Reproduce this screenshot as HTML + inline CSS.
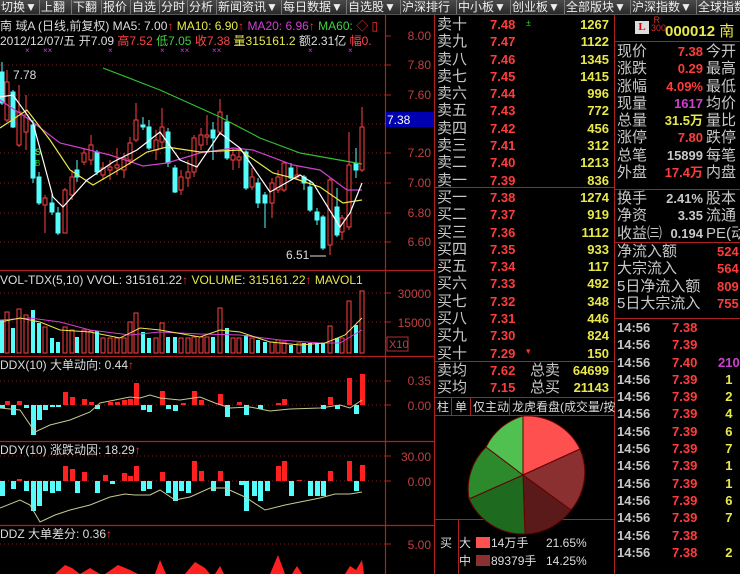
<!DOCTYPE html><html><head><meta charset="utf-8"><style>
*{margin:0;padding:0;box-sizing:border-box}
body{width:740px;height:574px;background:#000;overflow:hidden;position:relative;font-family:"Liberation Sans","Noto Sans CJK SC",sans-serif;}
.a{position:absolute;white-space:nowrap}
#tb{position:absolute;left:0;top:0;width:740px;height:15px;background:linear-gradient(#4a4a4a,#2a2a2a);border-bottom:1px solid #555;overflow:hidden}
#tb span{position:absolute;top:0;height:15px;line-height:15px;font-size:12px;color:#eee;border-right:1px solid #777;padding:0 1px;white-space:nowrap;overflow:hidden}
.ob{font-size:15px;color:#c8c8c8;line-height:17.3px}
.r{color:#ff3c3c;font-weight:bold}
.y{color:#e8e84a;font-weight:bold}
.g{color:#c8c8c8}
</style></head><body>
<div id="tb">
<span style="left:0;width:40px">切换▼</span><span style="left:40px;width:32px">上翻</span><span style="left:72px;width:30px">下翻</span><span style="left:102px;width:29px">报价</span><span style="left:131px;width:29px">自选</span><span style="left:160px;width:28px">分时</span><span style="left:188px;width:29px">分析</span><span style="left:217px;width:65px">新闻资讯▼</span><span style="left:282px;width:65px">每日数据▼</span><span style="left:347px;width:54px">自选股▼</span><span style="left:401px;width:56px">沪深排行</span><span style="left:457px;width:54px">中小板▼</span><span style="left:511px;width:54px">创业板▼</span><span style="left:565px;width:66px">全部版块▼</span><span style="left:631px;width:66px">沪深指数▼</span><span style="left:697px;width:60px">全球指数</span>
</div>
<div class="a" style="left:0;top:17px;font-size:12px;color:#ddd">南 琙A (日线,前复权) MA5: 7.00<span style="color:#f33">↑</span> <span style="color:#e8e84a">MA10: 6.90</span><span style="color:#f33">↑</span> <span style="color:#d040d0">MA20: 6.96</span><span style="color:#f33">↑</span> <span style="color:#40d040">MA60:</span> <span style="color:#f33">◇ ▯</span></div>
<div class="a" style="left:0;top:32px;font-size:12px;color:#ddd">2012/12/07/五 开7.09 <span style="color:#f44">高7.52</span> <span style="color:#4c4">低7.05</span> <span style="color:#f44">收7.38</span> <span style="color:#e8e84a">量315161.2</span> 额2.31亿 <span style="color:#f44">幅0.</span></div>
<svg class="a" style="left:0;top:0" width="440" height="574">
<g fill="#d040d0" font-size="8" font-family="Liberation Sans"><text x="25" y="53">×</text><text x="43" y="53">××</text><text x="108" y="53">×</text><text x="160" y="53">×</text><text x="180" y="53">××</text><text x="212" y="53">××</text><text x="308" y="53">×</text><text x="348" y="53">×</text></g>
<g stroke="#802020" stroke-dasharray="1,3"><line x1="0" x2="385" y1="65" y2="65"/><line x1="0" x2="385" y1="95" y2="95"/><line x1="0" x2="385" y1="124" y2="124"/><line x1="0" x2="385" y1="153" y2="153"/><line x1="0" x2="385" y1="183" y2="183"/><line x1="0" x2="385" y1="213" y2="213"/><line x1="0" x2="385" y1="242" y2="242"/><line x1="0" x2="385" y1="293" y2="293"/><line x1="0" x2="385" y1="322" y2="322"/><line x1="0" x2="385" y1="381" y2="381"/><line x1="0" x2="385" y1="405" y2="405"/><line x1="0" x2="385" y1="456" y2="456"/><line x1="0" x2="385" y1="481" y2="481"/><line x1="0" x2="385" y1="544" y2="544"/></g>
<g stroke="#b02020" stroke-width="1.2"><line x1="0" x2="434" y1="270.5" y2="270.5"/><line x1="0" x2="434" y1="356.5" y2="356.5"/><line x1="0" x2="434" y1="441.5" y2="441.5"/><line x1="0" x2="434" y1="525.5" y2="525.5"/><line x1="385.5" x2="385.5" y1="15" y2="574"/><line x1="434.5" x2="434.5" y1="15" y2="574"/></g>
<g id="candles" stroke-width="1">
<g stroke="#54fcfc" fill="#54fcfc">
<line x1="2" x2="2" y1="62" y2="105"/><rect x="0" y="72" width="4" height="31"/>
<line x1="13" x2="13" y1="90" y2="128"/><rect x="11" y="92" width="4" height="35"/>
<line x1="33" x2="33" y1="120" y2="183"/><rect x="31" y="125" width="4" height="53"/>
<line x1="39" x2="39" y1="172" y2="205"/><rect x="37" y="177" width="4" height="26"/>
<line x1="52" x2="52" y1="193" y2="215"/><rect x="50" y="203" width="4" height="9"/>
<line x1="58" x2="58" y1="207" y2="235"/><rect x="56" y="213" width="4" height="20"/>
<line x1="77" x2="77" y1="160" y2="182"/><rect x="75" y="170" width="4" height="7"/>
<line x1="97" x2="97" y1="150" y2="175"/><rect x="95" y="152" width="4" height="20"/>
<line x1="143" x2="143" y1="117" y2="130"/><rect x="141" y="125" width="4" height="2"/>
<line x1="149" x2="149" y1="120" y2="150"/><rect x="147" y="127" width="4" height="21"/>
<line x1="168" x2="168" y1="128" y2="167"/><rect x="166" y="132" width="4" height="31"/>
<line x1="175" x2="175" y1="165" y2="193"/><rect x="173" y="168" width="4" height="24"/>
<line x1="213" x2="213" y1="122" y2="160"/><rect x="211" y="130" width="4" height="8"/>
<line x1="227" x2="227" y1="115" y2="160"/><rect x="225" y="122" width="4" height="36"/>
<line x1="246" x2="246" y1="150" y2="190"/><rect x="244" y="152" width="4" height="36"/>
<line x1="258" x2="258" y1="178" y2="208"/><rect x="256" y="183" width="4" height="20"/>
<line x1="265" x2="265" y1="192" y2="228"/><rect x="263" y="195" width="4" height="8"/>
<line x1="291" x2="291" y1="163" y2="180"/><rect x="289" y="168" width="4" height="10"/>
<line x1="304" x2="304" y1="175" y2="190"/><rect x="302" y="177" width="4" height="6"/>
<line x1="310" x2="310" y1="180" y2="212"/><rect x="308" y="187" width="4" height="23"/>
<line x1="317" x2="317" y1="208" y2="225"/><rect x="315" y="212" width="4" height="8"/>
<line x1="323" x2="323" y1="215" y2="250"/><rect x="321" y="217" width="4" height="31"/>
<line x1="337" x2="337" y1="188" y2="237"/><rect x="335" y="207" width="4" height="28"/>
<line x1="356" x2="356" y1="148" y2="178"/><rect x="354" y="163" width="4" height="7"/>
</g>
<g stroke="#ff4040" fill="#000">
<line x1="7" x2="7" y1="70" y2="122"/><rect x="5" y="82" width="4" height="38"/>
<line x1="19" x2="19" y1="85" y2="147"/><rect x="17" y="112" width="4" height="33"/>
<line x1="26" x2="26" y1="95" y2="150"/><rect x="24" y="115" width="4" height="17"/>
<line x1="45" x2="45" y1="195" y2="233"/><rect x="43" y="198" width="4" height="7"/>
<line x1="65" x2="65" y1="188" y2="233"/><rect x="63" y="190" width="4" height="43"/>
<line x1="72" x2="72" y1="170" y2="200"/><rect x="70" y="177" width="4" height="18"/>
<line x1="84" x2="84" y1="148" y2="165"/><rect x="82" y="153" width="4" height="9"/>
<line x1="91" x2="91" y1="135" y2="165"/><rect x="89" y="145" width="4" height="15"/>
<line x1="103" x2="103" y1="162" y2="180"/><rect x="101" y="168" width="4" height="7"/>
<line x1="110" x2="110" y1="160" y2="180"/><rect x="108" y="167" width="4" height="3"/>
<line x1="117" x2="117" y1="148" y2="175"/><rect x="115" y="165" width="4" height="3"/>
<line x1="124" x2="124" y1="153" y2="178"/><rect x="122" y="158" width="4" height="12"/>
<line x1="130" x2="130" y1="137" y2="165"/><rect x="128" y="143" width="4" height="17"/>
<line x1="136" x2="136" y1="103" y2="142"/><rect x="134" y="120" width="4" height="20"/>
<line x1="156" x2="156" y1="130" y2="160"/><rect x="154" y="140" width="4" height="10"/>
<line x1="162" x2="162" y1="108" y2="148"/><rect x="160" y="127" width="4" height="15"/>
<line x1="181" x2="181" y1="170" y2="195"/><rect x="179" y="177" width="4" height="13"/>
<line x1="188" x2="188" y1="160" y2="187"/><rect x="186" y="172" width="4" height="6"/>
<line x1="194" x2="194" y1="135" y2="177"/><rect x="192" y="138" width="4" height="34"/>
<line x1="201" x2="201" y1="128" y2="150"/><rect x="199" y="135" width="4" height="10"/>
<line x1="207" x2="207" y1="115" y2="145"/><rect x="205" y="135" width="4" height="2"/>
<line x1="220" x2="220" y1="99" y2="135"/><rect x="218" y="112" width="4" height="20"/>
<line x1="233" x2="233" y1="148" y2="170"/><rect x="231" y="155" width="4" height="5"/>
<line x1="239" x2="239" y1="150" y2="168"/><rect x="237" y="157" width="4" height="3"/>
<line x1="252" x2="252" y1="168" y2="190"/><rect x="250" y="177" width="4" height="10"/>
<line x1="272" x2="272" y1="178" y2="218"/><rect x="270" y="183" width="4" height="20"/>
<line x1="278" x2="278" y1="170" y2="193"/><rect x="276" y="177" width="4" height="13"/>
<line x1="284" x2="284" y1="162" y2="192"/><rect x="282" y="163" width="4" height="27"/>
<line x1="297" x2="297" y1="165" y2="180"/><rect x="295" y="175" width="4" height="2"/>
<line x1="330" x2="330" y1="178" y2="255"/><rect x="328" y="180" width="4" height="65"/>
<line x1="342" x2="342" y1="215" y2="240"/><rect x="340" y="218" width="4" height="14"/>
<line x1="349" x2="349" y1="132" y2="230"/><rect x="347" y="165" width="4" height="62"/>
<line x1="362" x2="362" y1="107" y2="172"/><rect x="360" y="127" width="4" height="43"/>
</g></g>
<g fill="none" stroke-width="1.2">
<polyline stroke="#30c030" points="103,68 160,90 220,117 260,138 300,153 362,164"/>
<polyline stroke="#d040d0" points="0,100 30,120 60,143 110,155 143,166 167,163 200,153 233,148 253,150 293,165 320,170 347,190 362,190"/>
<polyline stroke="#e8e84a" points="0,128 27,110 50,140 70,170 93,185 127,165 147,152 167,147 200,152 240,150 273,173 293,178 320,187 343,203 362,200"/>
<polyline stroke="#ffffff" points="0,97 13,95 33,123 53,197 63,207 87,180 113,162 137,150 160,132 180,160 197,167 220,133 240,148 270,192 300,175 313,183 340,227 350,213 362,183"/>
</g>
<text x="13" y="79" fill="#ddd" font-size="12" font-family="Liberation Sans">7.78</text>
<text x="286" y="259" fill="#ddd" font-size="12" font-family="Liberation Sans">6.51</text>
<line x1="310" y1="256" x2="326" y2="256" stroke="#ddd"/>
<text x="35" y="155" fill="#30d030" font-size="9" font-weight="bold">S</text><text x="35" y="166" fill="#30d030" font-size="8">B</text>
<g font-family="Liberation Sans" font-size="12" fill="#c04040" text-anchor="end"><text x="431" y="40">8.00</text><text x="431" y="69">7.80</text><text x="431" y="99">7.60</text><text x="431" y="157">7.20</text><text x="431" y="187">7.00</text><text x="431" y="217">6.80</text><text x="431" y="246">6.60</text><text x="431" y="298">30000</text><text x="431" y="327">15000</text><text x="431" y="385">0.35</text><text x="431" y="410">0.00</text><text x="431" y="461">30.00</text><text x="431" y="486">0.00</text><text x="431" y="549">5.00</text></g>
<rect x="387" y="337" width="21" height="14" fill="none" stroke="#b03030"/><text x="389" y="348" fill="#c04040" font-size="11" font-family="Liberation Sans">X10</text>
<rect x="386" y="112" width="48" height="15" fill="#0000b0"/><text x="387" y="124" fill="#fff" font-size="12" font-family="Liberation Sans">7.38</text>
<g stroke="#b02020"><line x1="386" x2="391" y1="36" y2="36"/><line x1="386" x2="391" y1="65" y2="65"/><line x1="386" x2="391" y1="95" y2="95"/><line x1="386" x2="391" y1="153" y2="153"/><line x1="386" x2="391" y1="183" y2="183"/><line x1="386" x2="391" y1="213" y2="213"/><line x1="386" x2="391" y1="242" y2="242"/><line x1="386" x2="391" y1="293" y2="293"/><line x1="386" x2="391" y1="322" y2="322"/><line x1="386" x2="391" y1="381" y2="381"/><line x1="386" x2="391" y1="405" y2="405"/><line x1="386" x2="391" y1="456" y2="456"/><line x1="386" x2="391" y1="481" y2="481"/><line x1="386" x2="391" y1="544" y2="544"/></g>
<g font-family="Liberation Sans,Noto Sans CJK SC,sans-serif" font-size="12"><text x="0" y="284" fill="#ddd">VOL-TDX(5,10) VVOL: 315161.22<tspan fill="#f33">↑</tspan>  <tspan fill="#e8e84a">VOLUME: 315161.22</tspan><tspan fill="#f33">↑</tspan>  <tspan fill="#e8e84a">MAVOL1</tspan></text>
<text x="0" y="369" fill="#ddd">DDX(10) 大单动向: 0.44<tspan fill="#f33">↑</tspan></text>
<text x="0" y="454" fill="#ddd">DDY(10) 涨跌动因: 18.29<tspan fill="#f33">↑</tspan></text>
<text x="0" y="538" fill="#ddd">DDZ 大单差分: 0.36<tspan fill="#f33">↑</tspan></text></g>
<g id="vol">
<g fill="#54fcfc"><rect x="0" y="320" width="4" height="33"/><rect x="11" y="328" width="4" height="25"/><rect x="31" y="310" width="4" height="43"/><rect x="37" y="323" width="4" height="30"/><rect x="50" y="338" width="4" height="15"/><rect x="56" y="342" width="4" height="11"/><rect x="75" y="337" width="4" height="16"/><rect x="95" y="331" width="4" height="22"/><rect x="141" y="332" width="4" height="21"/><rect x="147" y="338" width="4" height="15"/><rect x="166" y="337" width="4" height="16"/><rect x="173" y="337" width="4" height="16"/><rect x="211" y="337" width="4" height="16"/><rect x="225" y="328" width="4" height="25"/><rect x="244" y="335" width="4" height="18"/><rect x="256" y="340" width="4" height="13"/><rect x="263" y="342" width="4" height="11"/><rect x="289" y="345" width="4" height="8"/><rect x="302" y="343" width="4" height="10"/><rect x="308" y="343" width="4" height="10"/><rect x="315" y="343" width="4" height="10"/><rect x="321" y="343" width="4" height="10"/><rect x="335" y="338" width="4" height="15"/><rect x="354" y="325" width="4" height="28"/></g>
<g fill="none" stroke="#ff4040"><rect x="5" y="312" width="4" height="41"/><rect x="17" y="309" width="4" height="44"/><rect x="24" y="315" width="4" height="38"/><rect x="43" y="327" width="4" height="26"/><rect x="63" y="327" width="4" height="26"/><rect x="70" y="330" width="4" height="23"/><rect x="82" y="330" width="4" height="23"/><rect x="89" y="331" width="4" height="22"/><rect x="101" y="338" width="4" height="15"/><rect x="108" y="338" width="4" height="15"/><rect x="115" y="338" width="4" height="15"/><rect x="122" y="338" width="4" height="15"/><rect x="128" y="322" width="4" height="31"/><rect x="134" y="313" width="4" height="40"/><rect x="154" y="338" width="4" height="15"/><rect x="160" y="323" width="4" height="30"/><rect x="179" y="338" width="4" height="15"/><rect x="186" y="338" width="4" height="15"/><rect x="192" y="337" width="4" height="16"/><rect x="199" y="337" width="4" height="16"/><rect x="205" y="337" width="4" height="16"/><rect x="218" y="308" width="4" height="45"/><rect x="231" y="338" width="4" height="15"/><rect x="237" y="338" width="4" height="15"/><rect x="250" y="338" width="4" height="15"/><rect x="270" y="342" width="4" height="11"/><rect x="276" y="340" width="4" height="13"/><rect x="282" y="342" width="4" height="11"/><rect x="297" y="343" width="4" height="10"/><rect x="328" y="326" width="4" height="27"/><rect x="340" y="338" width="4" height="15"/><rect x="347" y="301" width="4" height="52"/><rect x="360" y="291" width="4" height="62"/></g>
<polyline fill="none" stroke="#d040d0" points="0,320 30,318 60,322 90,330 130,335 160,332 200,334 240,335 280,340 320,343 340,343 350,337 362,330"/>
<polyline fill="none" stroke="#e8e84a" points="0,322 20,318 40,322 60,330 90,332 120,338 140,328 160,330 200,337 220,330 240,332 270,342 300,345 325,343 345,335 362,318"/>
</g>
<g id="ddx"><g fill="#ff2020"><rect x="5" y="401" width="5" height="4"/><rect x="17" y="401" width="5" height="4"/><rect x="63" y="392" width="5" height="13"/><rect x="70" y="397" width="5" height="8"/><rect x="82" y="399" width="5" height="6"/><rect x="89" y="402" width="5" height="3"/><rect x="108" y="402" width="5" height="3"/><rect x="115" y="402" width="5" height="3"/><rect x="122" y="400" width="5" height="5"/><rect x="128" y="399" width="5" height="6"/><rect x="134" y="383" width="5" height="22"/><rect x="160" y="391" width="5" height="14"/><rect x="181" y="403" width="5" height="2"/><rect x="192" y="391" width="5" height="14"/><rect x="199" y="400" width="5" height="5"/><rect x="218" y="394" width="5" height="11"/><rect x="237" y="402" width="5" height="3"/><rect x="276" y="403" width="5" height="2"/><rect x="282" y="399" width="5" height="6"/><rect x="328" y="397" width="5" height="8"/><rect x="347" y="378" width="5" height="27"/><rect x="360" y="374" width="5" height="31"/></g>
<g fill="#54fcfc"><rect x="0" y="405" width="5" height="3"/><rect x="11" y="405" width="5" height="10"/><rect x="24" y="405" width="5" height="3"/><rect x="31" y="405" width="5" height="30"/><rect x="37" y="405" width="5" height="15"/><rect x="43" y="405" width="5" height="5"/><rect x="50" y="405" width="5" height="2"/><rect x="56" y="405" width="5" height="2"/><rect x="95" y="405" width="5" height="4"/><rect x="141" y="405" width="5" height="5"/><rect x="147" y="405" width="5" height="7"/><rect x="166" y="405" width="5" height="4"/><rect x="173" y="405" width="5" height="6"/><rect x="225" y="405" width="5" height="12"/><rect x="244" y="405" width="5" height="10"/><rect x="258" y="405" width="5" height="4"/><rect x="321" y="405" width="5" height="4"/><rect x="335" y="405" width="5" height="4"/><rect x="354" y="405" width="5" height="9"/></g>
<polyline fill="none" stroke="#c8c890" points="0,408 20,410 35,432 50,425 70,420 90,412 100,403 130,397 140,398 150,395 160,398 180,400 200,397 215,403 230,408 250,407 270,411 290,409 320,408 340,405 350,408 362,400"/></g>
<g id="ddy"><g fill="#ff2020"><rect x="17" y="479" width="5" height="2"/><rect x="63" y="466" width="5" height="15"/><rect x="70" y="469" width="5" height="12"/><rect x="82" y="472" width="5" height="9"/><rect x="103" y="475" width="5" height="6"/><rect x="122" y="473" width="5" height="8"/><rect x="128" y="476" width="5" height="5"/><rect x="134" y="466" width="5" height="15"/><rect x="160" y="472" width="5" height="9"/><rect x="192" y="461" width="5" height="20"/><rect x="199" y="471" width="5" height="10"/><rect x="218" y="471" width="5" height="10"/><rect x="276" y="466" width="5" height="15"/><rect x="282" y="461" width="5" height="20"/><rect x="297" y="480" width="5" height="1"/><rect x="328" y="471" width="5" height="10"/><rect x="347" y="461" width="5" height="20"/><rect x="360" y="465" width="5" height="16"/></g>
<g fill="#54fcfc"><rect x="0" y="481" width="5" height="15"/><rect x="11" y="481" width="5" height="8"/><rect x="24" y="481" width="5" height="10"/><rect x="31" y="481" width="5" height="30"/><rect x="37" y="481" width="5" height="25"/><rect x="43" y="481" width="5" height="10"/><rect x="50" y="481" width="5" height="12"/><rect x="56" y="481" width="5" height="10"/><rect x="75" y="481" width="5" height="12"/><rect x="95" y="481" width="5" height="12"/><rect x="110" y="481" width="5" height="3"/><rect x="141" y="481" width="5" height="10"/><rect x="147" y="481" width="5" height="8"/><rect x="166" y="481" width="5" height="12"/><rect x="173" y="481" width="5" height="20"/><rect x="179" y="481" width="5" height="10"/><rect x="186" y="481" width="5" height="12"/><rect x="211" y="481" width="5" height="10"/><rect x="225" y="481" width="5" height="15"/><rect x="239" y="481" width="5" height="4"/><rect x="244" y="481" width="5" height="30"/><rect x="252" y="481" width="5" height="15"/><rect x="258" y="481" width="5" height="20"/><rect x="265" y="481" width="5" height="10"/><rect x="289" y="481" width="5" height="15"/><rect x="308" y="481" width="5" height="15"/><rect x="315" y="481" width="5" height="15"/><rect x="321" y="481" width="5" height="15"/><rect x="354" y="481" width="5" height="10"/></g>
<polyline fill="none" stroke="#c8c890" points="0,508 20,500 30,505 40,522 55,515 70,510 90,505 110,497 125,494 135,495 150,495 160,490 175,500 190,497 210,488 225,488 245,497 265,510 285,505 300,502 320,498 335,494 350,494 362,492"/></g>
<g fill="#ff2020"><polygon points="55,574 65,565 72,568 80,574"/><polygon points="80,574 90,568 100,574"/><polygon points="105,574 118,565 130,570 138,574"/><polygon points="155,574 160,560 166,574"/><polygon points="185,574 195,562 205,568 210,574"/><polygon points="215,574 220,566 224,574"/><polygon points="270,574 278,555 285,574"/><polygon points="292,574 297,566 302,574"/><polygon points="345,574 350,566 356,570 362,560 364,574"/></g>
</svg>
<svg class="a" style="left:434px;top:15px" width="306" height="559">
<g stroke="#b02020" fill="none"><line x1="1" x2="180" y1="172.5" y2="172.5"/><line x1="1" x2="180" y1="346.5" y2="346.5"/><line x1="1" x2="180" y1="382.5" y2="382.5"/><line x1="180.5" x2="180.5" y1="0" y2="559"/><line x1="1" x2="180" y1="400.5" y2="400.5"/><line x1="1" x2="180" y1="504.5" y2="504.5"/><line x1="17.5" x2="17.5" y1="383" y2="400"/><line x1="36.5" x2="36.5" y1="383" y2="400"/><line x1="75.5" x2="75.5" y1="383" y2="400"/><line x1="24.5" x2="24.5" y1="505" y2="559"/><line x1="181" x2="306" y1="26.5" y2="26.5"/><line x1="181" x2="306" y1="174.5" y2="174.5"/><line x1="181" x2="306" y1="227.5" y2="227.5"/><line x1="181" x2="306" y1="303.5" y2="303.5"/></g>
<g font-family="Liberation Sans,Noto Sans CJK SC,sans-serif" font-size="12" fill="#ddd"><text x="3" y="396">柱</text><text x="21" y="396">单</text><text x="39" y="396">仅主动</text><text x="78" y="396">龙虎看盘(成交量/按</text></g>
<g stroke="#600" stroke-width="1">
<path d="M89,460 L89,401 A59,59 0 0 1 146,434 Z" fill="#ff5050"/>
<path d="M89,460 L146,434 A59,59 0 0 1 137,495 Z" fill="#8a3030"/>
<path d="M89,460 L137,495 A59,59 0 0 1 91,519 Z" fill="#5a1a1a"/>
<path d="M89,460 L91,519 A59,59 0 0 1 35,484 Z" fill="#1e6a1e"/>
<path d="M89,460 L35,484 A59,59 0 0 1 52,432 Z" fill="#2c8a2c"/>
<path d="M89,460 L52,432 A59,59 0 0 1 89,401 Z" fill="#50c050"/>
</g>
<rect x="42" y="522" width="14" height="11" fill="#ff5050"/><rect x="42" y="540" width="14" height="11" fill="#8a3030"/>
<g font-family="Liberation Sans,Noto Sans CJK SC,sans-serif" font-size="12" fill="#ddd"><text x="6" y="532">买</text><text x="25" y="532">大</text><text x="25" y="550">中</text><text x="57" y="532">14万手</text><text x="112" y="532">21.65%</text><text x="57" y="550">89379手</text><text x="112" y="550">14.25%</text></g>
</svg>
<div class="a ob" style="left:437px;top:16px;width:40px">卖十<br>卖九<br>卖八<br>卖七<br>卖六<br>卖五<br>卖四<br>卖三<br>卖二<br>卖一</div>
<div class="a ob r" style="left:490px;top:16px;font-size:13px">7.48<br>7.47<br>7.46<br>7.45<br>7.44<br>7.43<br>7.42<br>7.41<br>7.40<br>7.39</div>
<div class="a ob y" style="right:131px;top:16px;font-size:13px;text-align:right">1267<br>1122<br>1345<br>1415<br>996<br>772<br>456<br>312<br>1213<br>836</div>
<div class="a" style="left:526px;top:18px;color:#3c3;font-size:9px">±</div>
<div class="a ob" style="left:437px;top:189px;width:40px">买一<br>买二<br>买三<br>买四<br>买五<br>买六<br>买七<br>买八<br>买九<br>买十</div>
<div class="a ob r" style="left:490px;top:189px;font-size:13px">7.38<br>7.37<br>7.36<br>7.35<br>7.34<br>7.33<br>7.32<br>7.31<br>7.30<br>7.29</div>
<div class="a" style="left:526px;top:346px;color:#f33;font-size:9px">▾</div>
<div class="a ob y" style="right:131px;top:189px;font-size:13px;text-align:right">1274<br>919<br>1112<br>933<br>117<br>492<br>348<br>446<br>824<br>150</div>
<div class="a ob" style="left:437px;top:362px">卖均<br>买均</div>
<div class="a ob r" style="left:490px;top:362px;font-size:13px">7.62<br>7.15</div>
<div class="a ob" style="left:530px;top:362px">总卖<br>总买</div>
<div class="a ob y" style="right:131px;top:362px;font-size:13px;text-align:right">64699<br>21143</div>
<div class="a" style="left:635px;top:21px;width:14px;height:13px;background:#ddd;color:#d00;font:bold 11px 'Liberation Serif',serif;text-align:center;line-height:13px">L</div>
<div class="a" style="left:651px;top:16px;color:#d03030;font-size:9px;line-height:8px">&nbsp;R<br>300</div>
<div class="a" style="left:665px;top:20px;color:#e8e84a;font-size:15px;font-weight:bold">000012 <span style="font-weight:normal">南</span></div>
<div class="a ob" style="left:617px;top:43px">现价<br>涨跌<br>涨幅<br>现量<br>总量<br>涨停<br>总笔<br>外盘</div>
<div class="a ob" style="right:0;top:43px;width:34px;overflow:hidden">今开<br>最高<br>最低<br>均价<br>量比<br>跌停<br>每笔<br>内盘</div>
<div class="a ob" style="right:37px;top:43px;font-size:13px;text-align:right;font-weight:bold"><span class="r">7.38</span><br><span class="r">0.29</span><br><span class="r">4.09%</span><br><span style="color:#d040d0">1617</span><br><span class="y">31.5万</span><br><span class="r">7.80</span><br><span class="g">15899</span><br><span class="r">17.4万</span></div>
<div class="a ob" style="left:617px;top:190px">换手<br>净资<br>收益㈢</div>
<div class="a ob g" style="right:37px;top:190px;font-size:13px;text-align:right;font-weight:bold">2.41%<br>3.35<br>0.194</div>
<div class="a ob" style="left:706px;top:190px">股本<br>流通<br>PE(动</div>
<div class="a ob" style="left:617px;top:243px">净流入额<br>大宗流入<br>5日净流入额<br>5日大宗流入</div>
<div class="a ob r" style="left:717px;top:243px;font-size:13px">524<br>564<br>809<br>755</div>
<div class="a ob g" style="left:617px;top:319px;font-size:13px;font-weight:bold">14:56<br>14:56<br>14:56<br>14:56<br>14:56<br>14:56<br>14:56<br>14:56<br>14:56<br>14:56<br>14:56<br>14:56<br>14:56<br>14:56</div>
<div class="a ob r" style="left:672px;top:319px;font-size:13px">7.38<br>7.39<br>7.40<br>7.39<br>7.39<br>7.39<br>7.39<br>7.39<br>7.39<br>7.39<br>7.39<br>7.39<br>7.38<br>7.38</div>
<div class="a ob y" style="left:718px;top:319px;font-size:13px"><br><br><span style="color:#d040d0">210</span><br>&nbsp;&nbsp;1<br>&nbsp;&nbsp;2<br>&nbsp;&nbsp;4<br>&nbsp;&nbsp;6<br>&nbsp;&nbsp;7<br>&nbsp;&nbsp;1<br>&nbsp;&nbsp;1<br>&nbsp;&nbsp;6<br>&nbsp;&nbsp;7<br><br>&nbsp;&nbsp;2</div>
</body></html>
